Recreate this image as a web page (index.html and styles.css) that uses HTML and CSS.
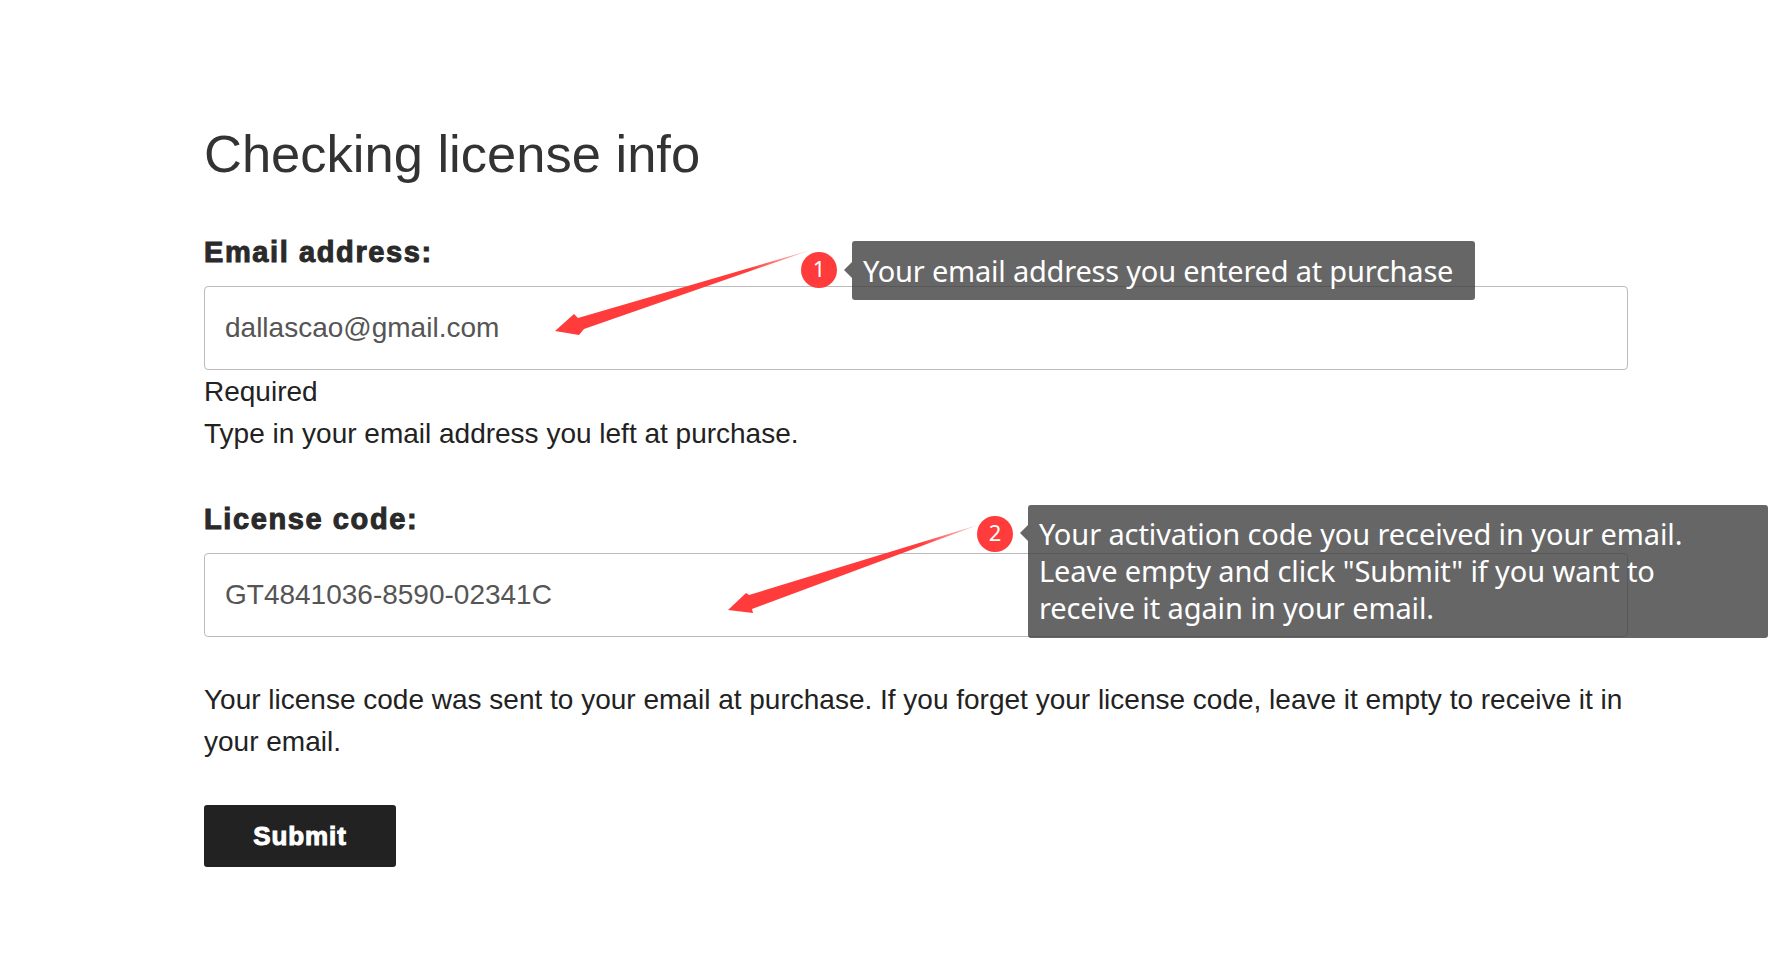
FILE: index.html
```html
<!DOCTYPE html>
<html lang="en">
<head>
<meta charset="utf-8">
<title>Checking license info</title>
<link rel="stylesheet" href="styles.css">
</head>
<body>
<main class="page">
  <h1 class="title">Checking license info</h1>
  <form class="form">
    <div class="field">
      <label class="label">Email address:</label>
      <div class="input">dallascao@gmail.com</div>
      <div class="help help-first">Required</div>
      <div class="help">Type in your email address you left at purchase.</div>
    </div>
    <div class="field field-second">
      <label class="label">License code:</label>
      <div class="input">GT4841036-8590-02341C</div>
      <p class="note">Your license code was sent to your email at purchase. If you forget your license code, leave it empty to receive it in your email.</p>
    </div>
    <button class="submit" type="button">Submit</button>
  </form>
</main>

<svg class="arrows" width="1769" height="961" viewBox="0 0 1769 961">
  <defs>
    <linearGradient id="a1" gradientUnits="userSpaceOnUse" x1="811" y1="250" x2="750" y2="273">
      <stop offset="0" stop-color="#ff3b3b" stop-opacity="0.25"/>
      <stop offset="1" stop-color="#ff3b3b"/>
    </linearGradient>
    <linearGradient id="a2" gradientUnits="userSpaceOnUse" x1="978" y1="525" x2="920" y2="543">
      <stop offset="0" stop-color="#ff3b3b" stop-opacity="0.25"/>
      <stop offset="1" stop-color="#ff3b3b"/>
    </linearGradient>
  </defs>
  <path fill="url(#a1)" d="M811 250 L578 318 L574 314 L555 331 L579 335 L584 329 Z"/>
  <path fill="url(#a2)" d="M978 525 L749 595 L746 593 L728 610 L753 613 L752 609 Z"/>
</svg>

<span class="badge badge-one">1</span>
<div class="tip tip-one">Your email address you entered at purchase</div>
<span class="badge badge-two">2</span>
<div class="tip tip-two">Your activation code you received in your email.<br>Leave empty and click "Submit" if you want to<br>receive it again in your email.</div>
</body>
</html>
```
FILE: styles.css
```css
* { box-sizing: border-box; }
html, body { margin: 0; padding: 0; background: #fff; }
body {
  width: 1769px;
  height: 961px;
  overflow: hidden;
  position: relative;
  font-family: "Liberation Sans", Arial, sans-serif;
  color: #222;
}
.page { padding: 122px 0 0 204px; width: 1628px; }
.title {
  margin: 0;
  font-size: 52.5px;
  line-height: 64px;
  font-weight: 400;
  color: #333;
}
.form { margin-top: 49px; }
.label {
  display: block;
  font-size: 29px;
  line-height: 34px;
  font-weight: 700;
  color: #2a2a2a;
  -webkit-text-stroke: 1px #2a2a2a;
  letter-spacing: 1.6px;
}
.input {
  height: 84px;
  margin-top: 17px;
  padding-left: 20px;
  border: 1px solid #bbb;
  border-radius: 4px;
  display: flex;
  align-items: center;
  font-size: 28px;
  color: #555;
  background: #fff;
}
.help { font-size: 28px; line-height: 42px; color: #222; }
.help-first { margin-top: 1px; }
.field-second { margin-top: 47px; }
.note {
  margin: 42px 0 0;
  font-size: 28px;
  line-height: 42px;
  color: #222;
}
.submit {
  display: block;
  width: 192px;
  height: 62px;
  margin-top: 42px;
  border: 0;
  border-radius: 3px;
  background: #222;
  color: #fff;
  font-family: "Liberation Sans", Arial, sans-serif;
  font-size: 26px;
  font-weight: 700;
  -webkit-text-stroke: 1px #fff;
  letter-spacing: 0.9px;
}
.arrows { position: absolute; left: 0; top: 0; }
.badge {
  position: absolute;
  width: 36px;
  height: 36px;
  border-radius: 50%;
  background: #ff3b3b;
  color: #fff;
  font-family: "Noto Sans", sans-serif;
  font-size: 22px;
  line-height: 33px;
  text-align: center;
}
.badge-one { left: 801px; top: 252px; }
.badge-two { left: 977px; top: 516px; }
.tip {
  position: absolute;
  background: rgba(64, 64, 64, 0.8);
  color: #fff;
  border-radius: 3px;
  font-family: "Noto Sans", sans-serif;
  font-size: 29px;
  line-height: 37px;
  padding-left: 11px;
  white-space: nowrap;
}
.tip::before {
  content: "";
  position: absolute;
  left: -8px;
  border: 8px solid transparent;
  border-left: 0;
  border-right-color: rgba(64, 64, 64, 0.8);
}
.tip-one { left: 852px; top: 241px; width: 623px; height: 59px; padding-top: 11px; letter-spacing: -0.21px; }
.tip-one::before { top: 21px; }
.tip-two { left: 1028px; top: 505px; width: 740px; height: 133px; padding-top: 10px; letter-spacing: -0.1px; }
.tip-two::before { top: 20px; }
```
